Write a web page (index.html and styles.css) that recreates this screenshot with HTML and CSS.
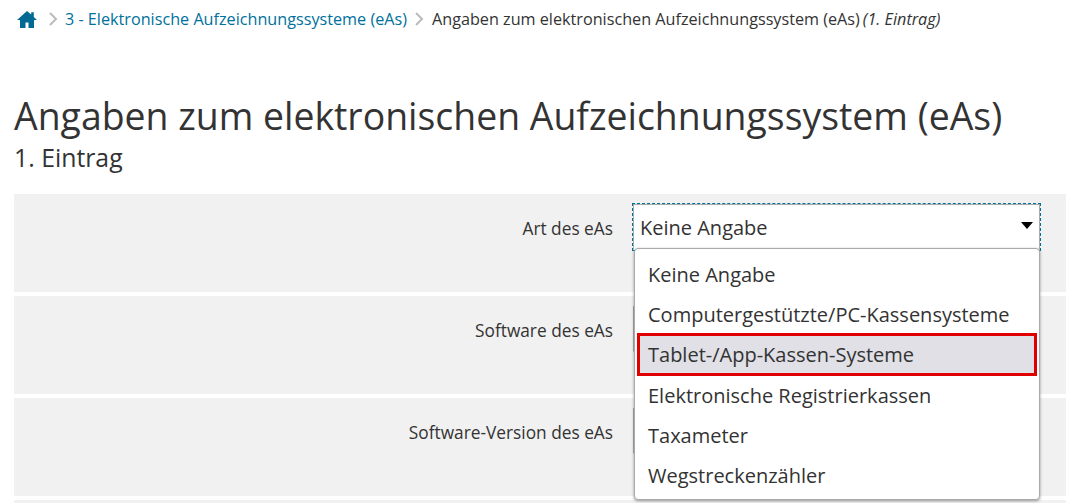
FILE: index.html
```html
<!DOCTYPE html>
<html lang="de">
<head>
<meta charset="utf-8">
<title>Angaben zum elektronischen Aufzeichnungssystem</title>
<link rel="stylesheet" href="styles.css">
</head>
<body>
<nav class="crumbs">
  <svg class="home" viewBox="0 0 20 17" width="20" height="17"><path d="M10 0 0 9h3v8h5.5v-5.5h3V17H17V9h3l-3.2-3V1.2h-2.6v2.4z" fill="#006a95"/></svg>
  <svg class="sep" viewBox="0 0 9 14" width="9" height="14"><path d="M1 1 7 7 1 13" fill="none" stroke="#bbb" stroke-width="2"/></svg>
  <a class="link">3 - Elektronische Aufzeichnungssysteme (eAs)</a>
  <svg class="sep" viewBox="0 0 9 14" width="9" height="14"><path d="M1 1 7 7 1 13" fill="none" stroke="#bbb" stroke-width="2"/></svg>
  <span class="current">Angaben zum elektronischen Aufzeichnungssystem (eAs)</span>
  <em class="entry">(1. Eintrag)</em>
</nav>
<h1 class="title">Angaben zum elektronischen Aufzeichnungssystem (eAs)</h1>
<h2 class="subtitle">1. Eintrag</h2>
<form class="rows">
  <div class="row">
    <label class="label">Art des eAs</label>
    <div class="field">
      <div class="select select-focus">
        <span>Keine Angabe</span>
        <span class="caret"></span>
      </div>
      <ul class="menu">
        <li class="opt">Keine Angabe</li>
        <li class="opt">Computergestützte/PC-Kassensysteme</li>
        <li class="opt opt-hl">Tablet-/App-Kassen-Systeme</li>
        <li class="opt">Elektronische Registrierkassen</li>
        <li class="opt">Taxameter</li>
        <li class="opt">Wegstreckenzähler</li>
      </ul>
    </div>
  </div>
  <div class="row">
    <label class="label">Software des eAs</label>
    <div class="field"><div class="select"></div></div>
  </div>
  <div class="row">
    <label class="label">Software-Version des eAs</label>
    <div class="field"><div class="select"></div></div>
  </div>
  <div class="row row-end"></div>
</form>
</body>
</html>
```

FILE: styles.css
```css
* { box-sizing: border-box; }
html, body { margin: 0; height: 503px; overflow: hidden; background: #fff; }
body { font-family: "Open Sans", "Noto Sans", sans-serif; color: #333; padding: 0 12px 0 14px; }

.crumbs { display: flex; align-items: center; height: 20px; margin-top: 9px; font-size: 16.2px; white-space: nowrap; }
.home { margin-left: 3px; margin-right: 12px; }
.sep { margin-right: 7px; }
.link { color: #00719c; margin-right: 8px; }
.link + .sep { margin-right: 8px; }
.entry { margin-left: 3px; }

.title { margin: 57px 0 0; font-size: 37.4px; font-weight: 400; line-height: 60px; white-space: nowrap; }
.subtitle { margin: 0; font-size: 24.8px; font-weight: 400; line-height: 22px; }

.rows { display: flex; flex-direction: column; gap: 4px; margin-top: 26px; }
.row { display: flex; height: 98px; background: #f1f1f1; padding-top: 10px; flex: none; }
.row-end { height: 3px; padding: 0; }
.label { width: 599px; text-align: right; font-size: 17.3px; line-height: 49px; height: 49px; }
.field { position: relative; margin-left: 20px; width: 407px; }
.select { display: flex; align-items: center; justify-content: space-between; height: 46px; padding: 0 6px; background: #fff; border: 1px solid #aaa; border-bottom-color: transparent; font-size: 20px; }
.select-focus { outline: 1px dashed #00719c; outline-offset: 0; }
.caret { width: 0; height: 0; border-left: 6px solid transparent; border-right: 6px solid transparent; border-top: 7px solid #000; margin-top: -4px; }

.menu { position: absolute; z-index: 2; top: 44px; left: 1px; right: 0; margin: 0; padding: 6px 0 0; height: 252px; list-style: none; background: #fff; border: 1px solid #aaa; border-radius: 4px; box-shadow: 0 1px 3px rgba(0,0,0,.4); }
.opt { height: 40.2px; line-height: 40px; padding-left: 13px; font-size: 20px; white-space: nowrap; }
.opt-hl { height: 43px; margin: -2.5px 2px -0.2px 2px; padding-left: 8px; line-height: 37px; background: #e0e0e6; border: 3px solid #e00000; }
```
